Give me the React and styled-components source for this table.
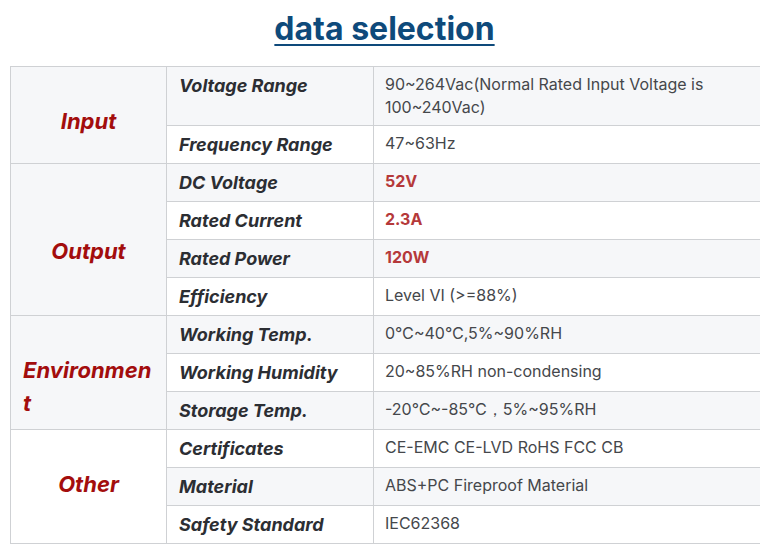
import React from 'react'
import styled, { createGlobalStyle } from 'styled-components'

const GlobalStyle = createGlobalStyle`
  body {
    margin: 0;
    background: #ffffff;
    font-family: Inter, "Liberation Sans", sans-serif;
  }
`

// Page wrapper
const Page = styled.div`
  width: 769px;
  padding: 8px 0 0 10px;
  box-sizing: border-box;
`

const Title = styled.h2`
  margin: 0 0 17px 0;
  padding-right: 10px;
  text-align: center;
  color: #0e4a7b;
  font-size: 32px;
  font-weight: 700;
  line-height: 41px;
  text-decoration: underline;
  text-decoration-thickness: 2px;
  text-underline-offset: 4px;
`

const Frame = styled.div`
  width: 750px;
  overflow: hidden;
`

const Table = styled.table`
  width: 752px;
  border-collapse: collapse;
  table-layout: fixed;
`

const Row = styled.tr`
  background: ${p => (p.$striped ? '#f6f7f9' : '#ffffff')};
`

const Cell = styled.td`
  border: 1px solid #cfd1d4;
  padding: 6px 12px 6px 11px;
  vertical-align: top;
`

// group names sit a little off-centre in the original, so nudge them
const GroupCell = styled(Cell)`
  vertical-align: middle;
  text-align: ${p => p.$align || 'center'};
  padding: ${p => 6 + Math.max(p.$shift || 0, 0) * 2}px 12px
    ${p => 6 + Math.max(-(p.$shift || 0), 0) * 2}px 12px;
  color: #a30d0d;
  font-size: 22px;
  font-weight: 700;
  font-style: italic;
  line-height: 33px;
  word-break: break-all;
`

const LabelCell = styled(Cell)`
  padding-left: 12px;
  color: #2c2e33;
  font-size: 18px;
  font-weight: 700;
  font-style: italic;
  line-height: 25px;
`

const ValueCell = styled(Cell)`
  color: ${p => (p.$hot ? '#b5393a' : '#45474b')};
  font-size: 16px;
  font-weight: ${p => (p.$hot ? 700 : 400)};
  line-height: 23px;
`

const groups = [
  {
    name: 'Input',
    shift: 6,
    rows: [
      ['Voltage Range', '90~264Vac(Normal Rated Input Voltage is 100~240Vac)'],
      ['Frequency Range', '47~63Hz'],
    ],
  },
  {
    name: 'Output',
    shift: 12,
    rows: [
      ['DC Voltage', '52V', true],
      ['Rated Current', '2.3A', true],
      ['Rated Power', '120W', true],
      ['Efficiency', 'Level VI (>=88%)'],
    ],
  },
  {
    name: 'Environment',
    align: 'left',
    shift: 14,
    rows: [
      ['Working Temp.', '0℃~40℃,5%~90%RH'],
      ['Working Humidity', '20~85%RH non-condensing'],
      ['Storage Temp.', '-20℃~-85℃，5%~95%RH'],
    ],
  },
  {
    name: 'Other',
    shift: -2,
    rows: [
      ['Certificates', 'CE-EMC CE-LVD RoHS FCC CB'],
      ['Material', 'ABS+PC Fireproof Material'],
      ['Safety Standard', 'IEC62368'],
    ],
  },
]

const App = () => {
  let index = 0
  return (
    <Page>
      <GlobalStyle />
      <Title>data selection</Title>
      <Frame>
        <Table>
          <colgroup>
            <col style={{ width: 156 }} />
            <col style={{ width: 207 }} />
            <col />
          </colgroup>
          <tbody>
            {groups.map(group =>
              group.rows.map(([label, value, hot], i) => {
                const striped = index % 2 === 0
                index += 1
                return (
                  <Row key={label} $striped={striped}>
                    {i === 0 && (
                      <GroupCell
                        rowSpan={group.rows.length}
                        $align={group.align}
                        $shift={group.shift}
                      >
                        {group.name}
                      </GroupCell>
                    )}
                    <LabelCell>{label}</LabelCell>
                    <ValueCell $hot={hot}>{value}</ValueCell>
                  </Row>
                )
              })
            )}
          </tbody>
        </Table>
      </Frame>
    </Page>
  )
}

export default App
